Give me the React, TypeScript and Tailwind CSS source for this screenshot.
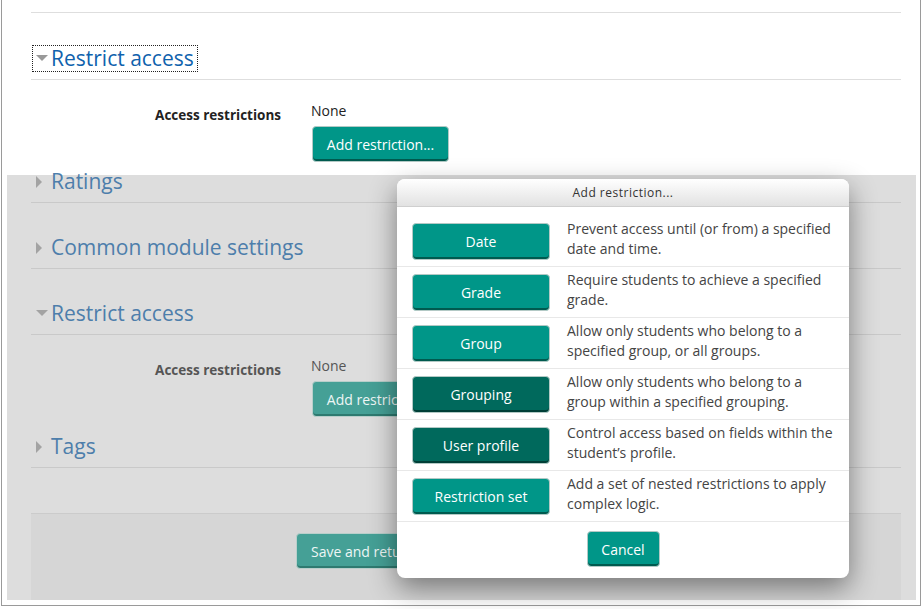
import React from 'react';

const font = { fontFamily: '"Open Sans", "Noto Sans", Arial, sans-serif' };

const TriDown = ({ color }: { color: string }) => (
  <svg width="12" height="7" viewBox="0 0 12 7" className="shrink-0">
    <path d="M0 0 L12 0 L6 6 Z" fill={color} />
  </svg>
);

const TriRight = ({ color }: { color: string }) => (
  <svg width="7" height="12" viewBox="0 0 7 12" className="shrink-0">
    <path d="M0 0 L6 6 L0 12 Z" fill={color} />
  </svg>
);

interface HeadingProps {
  title: string;
  open?: boolean;
  dim?: boolean;
  focus?: boolean;
  className?: string;
}

const Heading: React.FC<HeadingProps> = ({ title, open, dim, focus, className }) => (
  <div className={`flex border-b ${dim ? 'border-[#c9c9c9]' : 'border-[#dedede]'} ${className ?? 'pb-[7px]'}`}>
    <div
      className={`flex items-center h-[27px] ml-[1px] pl-[3px] pr-[3px] border border-dotted ${
        focus ? 'border-[#222]' : 'border-transparent'
      }`}
    >
      <span className="w-[15px] flex items-center">
        {open ? <TriDown color={dim ? '#a3a3a3' : '#999'} /> : <TriRight color={dim ? '#a3a3a3' : '#999'} />}
      </span>
      <span className={`text-[21px] leading-[27px] ${dim ? 'text-[#4d7eab]' : 'text-[#0f62ad]'}`}>{title}</span>
    </div>
  </div>
);

const AccessRow = ({ dim }: { dim?: boolean }) => (
  <div className="flex pt-[21px]">
    <div className={`w-[250px] text-right pt-[4px] text-[13.5px] leading-[20px] font-bold ${dim ? 'text-[#555]' : 'text-[#222]'}`}>
      Access restrictions
    </div>
    <div className="ml-[30px] flex flex-col items-start">
      <div className={`text-[14px] leading-[20px] ${dim ? 'text-[#555]' : 'text-[#222]'}`}>None</div>
      <button
        className={`mt-[5px] ml-[1px] h-[36px] w-[137px] rounded-[4px] border text-[14px] ${
          dim
            ? 'bg-[#45a096] border-[#b9cfcb] text-[#eef6f5] shadow-[inset_0_-2px_0_#2e7a70]'
            : 'bg-[#009688] border-[#b3c9c5] text-white shadow-[inset_0_-2px_0_#005a4f]'
        }`}
      >
        Add restriction...
      </button>
    </div>
  </div>
);

const options = [
  { label: 'Date', lines: ['Prevent access until (or from) a specified', 'date and time.'], dark: false },
  { label: 'Grade', lines: ['Require students to achieve a specified', 'grade.'], dark: false },
  { label: 'Group', lines: ['Allow only students who belong to a', 'specified group, or all groups.'], dark: false },
  { label: 'Grouping', lines: ['Allow only students who belong to a', 'group within a specified grouping.'], dark: true },
  { label: 'User profile', lines: ['Control access based on fields within the', 'student\u2019s profile.'], dark: true },
  { label: 'Restriction set', lines: ['Add a set of nested restrictions to apply', 'complex logic.'], dark: false },
];

const TealButton = ({ label, dark, className }: { label: string; dark?: boolean; className?: string }) => (
  <button
    className={`rounded-[4px] border border-[#b3c9c5] text-white text-[14px] ${
      dark ? 'bg-[#00695c] shadow-[inset_0_-2px_0_#003f37]' : 'bg-[#009688] shadow-[inset_0_-2px_0_#005a4f]'
    } ${className ?? ''}`}
  >
    {label}
  </button>
);

const Modal = () => (
  <div className="absolute left-[397px] top-[179px] w-[452px] bg-white rounded-[8px] shadow-[0_10px_28px_rgba(0,0,0,0.45)] overflow-hidden">
    <div className="h-[28px] border-b border-[#cfcfcf] bg-gradient-to-b from-white to-[#e2e2e2] flex items-center justify-center">
      <span className="text-[12px] tracking-[0.5px] text-[#333]">Add restriction...</span>
    </div>
    <div className="pt-[9px]">
      {options.map((o) => (
        <div key={o.label} className="h-[51px] flex items-start border-b border-[#e8e8e8] pl-[15px]">
          <TealButton label={o.label} dark={o.dark} className="mt-[7px] w-[138px] h-[37px] shrink-0" />
          <div className="ml-[17px] pt-[3px] text-[14px] leading-[20px] text-[#444] whitespace-nowrap">
            {o.lines[0]}
            <br />
            {o.lines[1]}
          </div>
        </div>
      ))}
    </div>
    <div className="flex justify-center pt-[9px] pb-[11px]">
      <TealButton label="Cancel" className="w-[73px] h-[36px]" />
    </div>
  </div>
);

export default function App() {
  return (
    <div className="relative w-[923px] h-[609px] bg-white overflow-hidden" style={font}>
      <div className="ml-[1px] w-[920px] h-[606px] border-x border-b border-[#9a9a9a] pl-[5px] pr-[4px] pb-[5px]">
        <div className="w-[909px] h-[600px] flex flex-col">
          {/* top, not covered by the mask */}
          <div className="h-[175px] shrink-0 bg-white pl-[24px] pr-[15px]">
            <div className="mt-[12px] border-t border-[#dedede]" />
            <Heading title="Restrict access" open focus className="mt-[32px] pb-[7px]" />
            <AccessRow />
          </div>
          {/* masked area */}
          <div className="flex-1 flex flex-col bg-[#dddddd] pl-[24px] pr-[15px]">
            <Heading title="Ratings" dim className="-mt-[7px] pb-[7px]" />
            <Heading title="Common module settings" dim className="mt-[31px] pb-[7px]" />
            <Heading title="Restrict access" open dim className="mt-[31px] pb-[7px]" />
            <AccessRow dim />
            <Heading title="Tags" dim className="mt-[16px] pb-[7px]" />
            <div className="mt-[45px] flex-1 bg-[#d6d6d6] border-t border-[#cbcbcb] pt-[19px] pl-[265px]">
              <button className="h-[36px] px-[14px] rounded-[4px] border border-[#b9cfcb] bg-[#45a096] text-[#eef6f5] text-[14px] shadow-[inset_0_-2px_0_#2e7a70]">
                Save and return to course
              </button>
            </div>
          </div>
        </div>
      </div>
      <Modal />
    </div>
  );
}
